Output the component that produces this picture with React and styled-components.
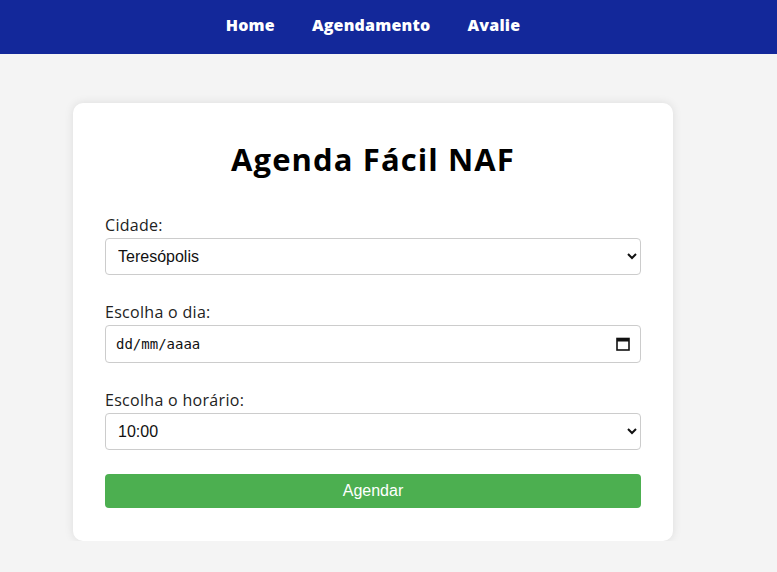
import styled, { createGlobalStyle } from "styled-components";

const GlobalStyle = createGlobalStyle`
  body {
    margin: 0;
    background-color: #f4f4f4;
    font-family: "Open Sans", "Noto Sans", sans-serif;
    color: #222;
  }
  * {
    box-sizing: border-box;
  }
`;

const NavBar = styled.nav`
  background-color: #13289a;
  height: 54px;
  display: flex;
  align-items: center;
  justify-content: center;
  gap: 37px;
  padding-right: 31px;
  padding-bottom: 4px;

  a {
    color: white;
    text-decoration: none;
    font-weight: 800;
    font-size: 16px;
    letter-spacing: 0.2px;
  }
`;

const Main = styled.main`
  display: flex;
  justify-content: center;
  padding: 49px 31px 0 0;
`;

const Card = styled.form`
  width: 600px;
  background: white;
  border-radius: 10px;
  box-shadow: 0 0 10px rgba(0, 0, 0, 0.1);
  padding: 35px 32px 33px;
  display: flex;
  flex-direction: column;
`;

const Title = styled.h1`
  margin: 0 0 34px;
  text-align: center;
  font-size: 31px;
  letter-spacing: 1.1px;
  line-height: 42px;
  font-weight: 700;
  color: #000;
`;

const Field = styled.div`
  display: flex;
  flex-direction: column;
  margin-bottom: ${(props) => props.spacing ?? "26px"};
`;

const Label = styled.label`
  font-size: 16px;
  letter-spacing: 0.3px;
  line-height: 22px;
  color: #222;
  margin-bottom: 2px;
`;

const Select = styled.select`
  width: 100%;
  height: 37px;
  padding: 0 8px;
  font-family: "Liberation Sans", Arial, sans-serif;
  font-size: 16px;
  color: #111;
  background: white;
  border: 1px solid #ccc;
  border-radius: 4px;
`;

const DateBox = styled.div`
  height: 38px;
  display: flex;
  align-items: center;
  justify-content: space-between;
  padding: 0 10px 0 10px;
  border: 1px solid #ccc;
  border-radius: 4px;
  background: white;
  font-family: "DejaVu Sans Mono", "Liberation Mono", monospace;
  font-size: 14px;
  color: #111;
`;

const Button = styled.button`
  height: 34px;
  background-color: #4caf50;
  color: white;
  border: none;
  border-radius: 4px;
  font-family: "Liberation Sans", Arial, sans-serif;
  font-size: 16px;
  cursor: pointer;
`;

function CalendarIcon() {
  return (
    <svg width="14" height="14" viewBox="0 0 14 14">
      <rect x="1" y="1.5" width="12" height="11.5" fill="none" stroke="#111" strokeWidth="1.6" />
      <rect x="1" y="1.5" width="12" height="3" fill="#111" />
    </svg>
  );
}

export default function App() {
  return (
    <>
      <GlobalStyle />
      <NavBar>
        <a href="#">Home</a>
        <a href="#">Agendamento</a>
        <a href="#">Avalie</a>
      </NavBar>
      <Main>
        <Card onSubmit={(e) => e.preventDefault()}>
          <Title>Agenda Fácil NAF</Title>
          <Field>
            <Label>Cidade:</Label>
            <Select defaultValue="Teresópolis">
              <option>Teresópolis</option>
            </Select>
          </Field>
          <Field>
            <Label>Escolha o dia:</Label>
            <DateBox>
              <span>dd/mm/aaaa</span>
              <CalendarIcon />
            </DateBox>
          </Field>
          <Field spacing="24px">
            <Label>Escolha o horário:</Label>
            <Select defaultValue="10:00">
              <option>10:00</option>
            </Select>
          </Field>
          <Button type="submit">Agendar</Button>
        </Card>
      </Main>
    </>
  );
}
